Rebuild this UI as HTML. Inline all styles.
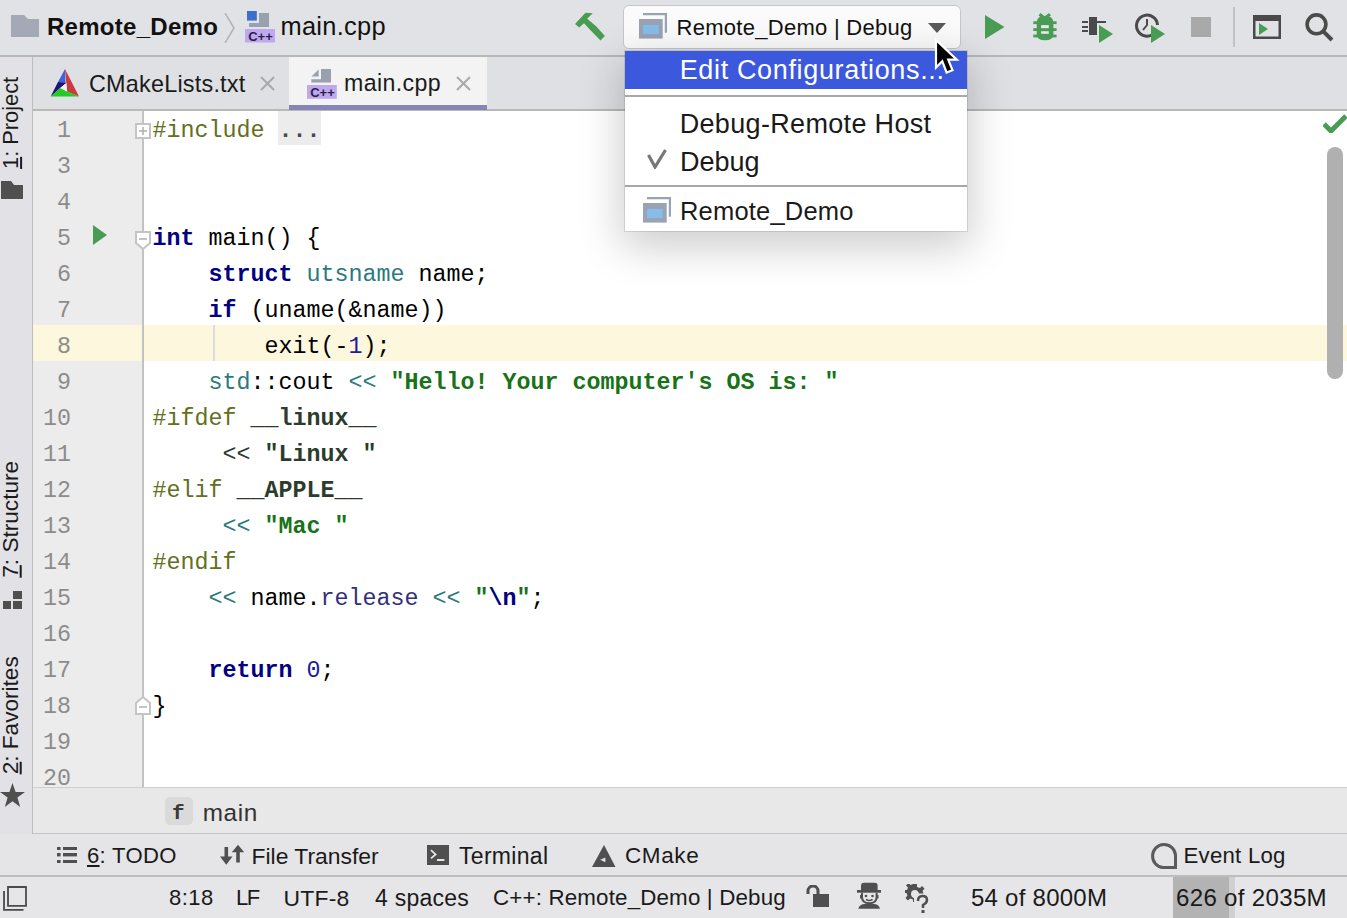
<!DOCTYPE html>
<html><head><meta charset="utf-8">
<style>
*{margin:0;padding:0;box-sizing:border-box}
html,body{width:1347px;height:918px;overflow:hidden;background:#e6e6e6;font-family:"Liberation Sans",sans-serif;color:#1a1a1a}
.a{position:absolute}
.t{position:absolute;white-space:pre;line-height:1}
#toolbar{left:0;top:0;width:1347px;height:57px;background:#e1e2e6;border-bottom:2px solid #b6b7b6}
#tabs{left:32px;top:57px;width:1315px;height:54px;background:#dfe0e4;border-bottom:2px solid #b8b8b8}
#strip{left:0;top:57px;width:33px;height:820px;background:#e2e2e6;border-right:1px solid #bdbdbd}
#gutter{left:33px;top:111px;width:111px;height:677px;background:#ececec;border-right:2px solid #c2c2c2}
#editor{left:144px;top:111px;width:1203px;height:677px;background:#fff;overflow:hidden}
#crumbs{left:33px;top:788px;width:1314px;height:46px;background:#e8e8e8;border-top:1px solid #cfcfcf;border-bottom:1px solid #c4c4c4}
#twbar{left:0;top:834px;width:1347px;height:43px;background:#e5e5e7;border-bottom:2px solid #bdbdbd}
#status{left:0;top:877px;width:1347px;height:41px;background:#e6e6e9}
.code{font-family:"Liberation Mono",monospace;font-size:23.33px}
.ln{position:absolute;left:33px;width:38px;text-align:right;font-family:"Liberation Mono",monospace;font-size:23.33px;color:#8c8c8c;white-space:pre}
.cl{position:absolute;left:153px;font-family:"Liberation Mono",monospace;font-size:23.33px;color:#000;white-space:pre}
.kw{color:#000080;font-weight:bold}
.pp{color:#627020}
.ty{color:#2a7a7e}
.st{color:#187218;font-weight:bold}
.in{color:#2b3b2d;font-weight:bold}
.fd{color:#32307a}
.nm{color:#1d1d9a}
.ui{font-family:"Liberation Sans",sans-serif}
</style></head><body>

<!-- TOOLBAR -->
<div id="toolbar" class="a"></div>
<svg class="a" style="left:11px;top:15px" width="29" height="22" viewBox="0 0 29 22"><path d="M0 0H13L17 4H28V22H0Z" fill="#a3a9b7"/></svg>
<div class="t" style="left:47px;top:15px;font-size:24px;font-weight:bold;color:#111;letter-spacing:0.28px">Remote_Demo</div>
<svg class="a" style="left:224px;top:13px" width="12" height="30" viewBox="0 0 12 30"><path d="M1 0L10 15L1 30" stroke="#b3b3b3" stroke-width="1.5" fill="none"/></svg>
<!-- c++ file icon -->
<svg class="a" style="left:245px;top:11px" width="30" height="32" viewBox="0 0 30 32"><path d="M14 2H24V16H4V12H14Z" fill="#9aa1ae"/><rect x="2" y="0" width="9.8" height="9.6" fill="#3a6fcc"/><rect x="0" y="18" width="30" height="13.5" fill="#c0a8f0"/><text x="15.5" y="29.6" font-family="Liberation Sans" font-size="13" font-weight="bold" fill="#2a2245" text-anchor="middle">C++</text></svg>
<div class="t" style="left:280.5px;top:13.5px;font-size:25.4px;color:#111;letter-spacing:0.3px">main.cpp</div>

<!-- hammer -->
<svg class="a" style="left:570px;top:8px" width="40" height="40" viewBox="0 0 40 40"><path d="M5 16.1L15.5 4.8L22.7 5.2L17.2 10.7L26.1 18.3L34.9 27.9L30.5 32.5L20 21.8L14 15.3L9.2 19.4Z" fill="#4a9c52"/></svg>
<!-- combo -->
<div class="a" style="left:623px;top:5px;width:338px;height:44px;background:#fbfbfb;border:1px solid #c6c6c6;border-radius:6px"></div>
<svg class="a" style="left:639px;top:13px" width="29" height="26" viewBox="0 0 29 26"><path d="M4 0H28V19.7H25.8V2.2H4Z" fill="#9aa3b3"/><rect x="0" y="6" width="23.7" height="19.6" fill="#9aa3b3"/><rect x="4.1" y="11.9" width="15.6" height="9.2" fill="#86bde9"/></svg>
<div class="t" style="left:676.5px;top:17px;font-size:22px;color:#111;letter-spacing:0.28px">Remote_Demo | Debug</div>
<svg class="a" style="left:928px;top:23px" width="18" height="10" viewBox="0 0 18 10"><path d="M0 0H18L9 10Z" fill="#5a5a5a"/></svg>

<!-- run icons -->
<svg class="a" style="left:985px;top:15px" width="20" height="24" viewBox="0 0 20 24"><path d="M0 0L19.5 12L0 24Z" fill="#499c54"/></svg>
<svg class="a" style="left:1028px;top:8px" width="35" height="37" viewBox="0 0 35 37"><g fill="#499c54"><path d="M11.5 6.3L16.7 10.3L22 6.3" stroke="#499c54" stroke-width="3.2" fill="none"/><path d="M11.5 9H22.5Q25.4 11 25.4 15V26Q25.4 32.3 17 32.3Q8.7 32.3 8.7 26V15Q8.7 11 11.5 9Z"/><rect x="5.3" y="13.3" width="23.3" height="2.8"/><rect x="5.3" y="20.2" width="23.3" height="2.8"/><rect x="5.3" y="26.6" width="23.3" height="2.8"/></g><rect x="13.1" y="17.1" width="7.7" height="3.1" fill="#e7e7e7"/><rect x="13.1" y="23.2" width="7.7" height="2.6" fill="#e7e7e7"/></svg>
<svg class="a" style="left:1082px;top:16px" width="32" height="28" viewBox="0 0 32 28"><g fill="#4a4a4a"><rect x="7" y="1" width="8" height="18"/><rect x="7" y="5" width="17" height="2"/><rect x="0" y="5" width="6" height="2"/><rect x="0" y="10" width="6" height="2"/><rect x="0" y="14" width="6" height="2"/></g><path d="M17 9L31 18L17 27Z" fill="#499c54"/></svg>
<svg class="a" style="left:1134px;top:13px" width="32" height="31" viewBox="0 0 32 31"><path d="M20 20.5A10.5 10.5 0 1 1 23.5 12" stroke="#4a4a4a" stroke-width="3" fill="none"/><path d="M13 6V12L9 17" stroke="#4a4a4a" stroke-width="2" fill="none"/><path d="M17 12L31 21L17 30Z" fill="#499c54"/></svg>
<div class="a" style="left:1191px;top:17px;width:20px;height:20px;background:#a9a9a9"></div>
<div class="a" style="left:1233px;top:7px;width:2px;height:40px;background:#c2c2c2"></div>
<svg class="a" style="left:1253px;top:15px" width="28" height="24" viewBox="0 0 28 24"><path d="M0 0H28V24H0Z M2.5 6V21.5H25.5V6Z" fill="#4a4a4a" fill-rule="evenodd"/><path d="M6 8L15 14L6 20Z" fill="#499c54"/></svg>
<svg class="a" style="left:1304px;top:12px" width="31" height="30" viewBox="0 0 31 30"><circle cx="12.5" cy="12.3" r="9.4" stroke="#4a4a4a" stroke-width="3.6" fill="none"/><path d="M19.3 19.3L28 28" stroke="#4a4a4a" stroke-width="4"/></svg>


<!-- TABS -->
<div id="tabs" class="a"></div>
<div class="a" style="left:289px;top:57px;width:198px;height:53px;background:#f3f3f3"></div>
<div class="a" style="left:289px;top:105px;width:198px;height:5px;background:#8785b6"></div>
<svg class="a" style="left:50px;top:68px" width="30" height="30" viewBox="0 0 30 30"><path d="M15 1L8 14L15.5 14.5Z" fill="#4060e0"/><path d="M8 14L0.7 28.4L10.2 20.1L16.3 14.9L15.5 14.5Z" fill="#1e1478"/><path d="M15 1L29 28.4L17 23.5L16.3 14.9Z" fill="#c83c40"/><path d="M0.7 28.4L29 28.4L17 23.5L10.2 20.1Z" fill="#22cc22"/><path d="M16.3 14.9L10.2 20.1L17 23.5Z" fill="#f4f4f4"/></svg>
<div class="t" style="left:89px;top:72.5px;font-size:23.4px;color:#1a1a1a;letter-spacing:0.22px">CMakeLists.txt</div>
<svg class="a" style="left:260px;top:76px" width="15" height="15" viewBox="0 0 15 15"><path d="M1 1L14 14M14 1L1 14" stroke="#a9a9a9" stroke-width="2"/></svg>
<svg class="a" style="left:307px;top:69px" width="31" height="31" viewBox="0 0 31 31"><path d="M4.5 7.5L11.6 0.4V7.5Z" fill="#9aa1ae"/><path d="M14 0H24V13.5H4.3V10.3H14Z" fill="#9aa1ae"/><rect x="0" y="16" width="29.8" height="13.8" fill="#c0a8f0"/><text x="15.5" y="27.8" font-family="Liberation Sans" font-size="13" font-weight="bold" fill="#2a2245" text-anchor="middle">C++</text></svg>
<div class="t" style="left:344px;top:72px;font-size:23.15px;color:#1a1a1a;letter-spacing:0.4px">main.cpp</div>
<svg class="a" style="left:456px;top:76px" width="15" height="15" viewBox="0 0 15 15"><path d="M1 1L14 14M14 1L1 14" stroke="#a9a9a9" stroke-width="2"/></svg>

<!-- LEFT STRIP -->
<div id="strip" class="a"></div>
<div class="t" style="left:-39px;top:112px;width:100px;font-size:21.8px;color:#1a1a1a;transform:rotate(-90deg);transform-origin:center;text-align:center"><u>1</u>: Project</div>
<svg class="a" style="left:1px;top:181px" width="22" height="18" viewBox="0 0 22 18"><path d="M0 0H10L13 4H22V18H0Z" fill="#4f4f4f"/></svg>
<div class="t" style="left:-52px;top:508px;width:126px;font-size:22.6px;color:#1a1a1a;transform:rotate(-90deg);transform-origin:center;text-align:center"><u>7</u>: Structure</div>
<svg class="a" style="left:3px;top:591px" width="19" height="18" viewBox="0 0 19 18"><rect x="10" y="0" width="9" height="8" fill="#4f4f4f"/><rect x="0" y="10" width="8" height="8" fill="#4f4f4f"/><rect x="10" y="10" width="9" height="8" fill="#4f4f4f"/></svg>
<div class="t" style="left:-52px;top:704px;width:126px;font-size:22.6px;color:#1a1a1a;transform:rotate(-90deg);transform-origin:center;text-align:center"><u>2</u>: Favorites</div>
<svg class="a" style="left:0px;top:783px" width="25" height="25" viewBox="0 0 25 25"><path d="M12.5 0L15.6 9H25L17.4 14.6L20.2 24L12.5 18.2L4.8 24L7.6 14.6L0 9H9.4Z" fill="#4f4f4f"/></svg>

<!-- GUTTER + EDITOR -->
<div id="gutter" class="a"></div>
<div id="editor" class="a"></div>
<div class="a" style="left:33px;top:325px;width:109px;height:36px;background:#fcf7dd"></div>
<div class="a" style="left:144px;top:325px;width:1203px;height:36px;background:#fcf7dd"></div>
<div class="a" style="left:213px;top:325px;width:2px;height:36px;background:#dcdcdc"></div>
<div class="a" style="left:278px;top:111px;width:43px;height:34px;background:#ececec"></div>

<div class="a" style="left:0;top:113px;width:80px;font-family:'Liberation Mono',monospace;font-size:23.33px;line-height:36px;color:#8c8c8c;text-align:right;white-space:pre;padding-right:9px">1
3
4
5
6
7
8
9
10
11
12
13
14
15
16
17
18
19
20</div>

<div class="a code" style="left:152.5px;top:113.2px;line-height:36px;white-space:pre;color:#000"><span class="pp">#include</span> <span style="color:#4a4a4a;font-weight:bold">...</span>


<span class="kw">int</span> main() {
    <span class="kw">struct</span> <span class="ty">utsname</span> name;
    <span class="kw">if</span> (uname(&amp;name))
        exit(-<span class="nm">1</span>);
    <span class="ty">std</span>::cout <span class="ty">&lt;&lt;</span> <span class="st">"Hello! Your computer's OS is: "</span>
<span class="pp">#ifdef</span> <span class="in">__linux__</span>
     <span style="color:#2b3b2d">&lt;&lt;</span> <span class="in">"Linux "</span>
<span class="pp">#elif</span> <span class="in">__APPLE__</span>
     <span class="ty">&lt;&lt;</span> <span class="st">"Mac "</span>
<span class="pp">#endif</span>
    <span class="ty">&lt;&lt;</span> name.<span class="fd">release</span> <span class="ty">&lt;&lt;</span> <span class="st">"<span class="kw">\n</span>"</span>;

    <span class="kw">return</span> <span class="nm">0</span>;
}</div>

<!-- gutter icons -->
<svg class="a" style="left:135px;top:123px" width="16" height="16" viewBox="0 0 16 16"><rect x="1" y="1" width="14" height="14" fill="#fff" stroke="#c4c4c4" stroke-width="2"/><path d="M4 8H12M8 4V12" stroke="#b0b0b0" stroke-width="1.5"/></svg>
<svg class="a" style="left:135px;top:231px" width="16" height="19" viewBox="0 0 16 19"><path d="M1 1H15V12L8 18L1 12Z" fill="#fff" stroke="#c4c4c4" stroke-width="2"/><path d="M4 8H12" stroke="#b0b0b0" stroke-width="1.5"/></svg>
<svg class="a" style="left:135px;top:696px" width="16" height="19" viewBox="0 0 16 19"><path d="M1 18H15V7L8 1L1 7Z" fill="#fff" stroke="#c4c4c4" stroke-width="2"/><path d="M4 11H12" stroke="#b0b0b0" stroke-width="1.5"/></svg>
<svg class="a" style="left:93px;top:225px" width="14" height="20" viewBox="0 0 14 20"><path d="M0 0L14 10L0 20Z" fill="#499c54"/></svg>

<!-- right side -->
<svg class="a" style="left:1323px;top:114px" width="24" height="19" viewBox="0 0 24 19"><path d="M1 10L8 17L23 2" stroke="#499c54" stroke-width="5" fill="none"/></svg>
<div class="a" style="left:1327px;top:147px;width:16px;height:232px;background:#b0b0b0;border-radius:8px"></div>

<!-- BREADCRUMBS -->
<div id="crumbs" class="a" style="top:787px;height:47px"></div>
<div class="a" style="left:165px;top:797px;width:28px;height:28px;background:#dadada;border-radius:5px"></div>
<div class="t" style="left:172px;top:803px;font-family:'Liberation Mono',monospace;font-size:21px;color:#3a3a3a;font-weight:bold">f</div>
<div class="t" style="left:202.7px;top:801px;font-size:24.3px;color:#333;letter-spacing:0.6px">main</div>

<!-- TOOL WINDOW BAR -->
<div id="twbar" class="a"></div>
<svg class="a" style="left:57px;top:847px" width="21" height="17" viewBox="0 0 21 17"><g fill="#4f4f4f"><rect x="0" y="0" width="3.6" height="3"/><rect x="6" y="0" width="14" height="3"/><rect x="0" y="6" width="3.6" height="3.4"/><rect x="6" y="6" width="14" height="3.4"/><rect x="0" y="13" width="3.6" height="3"/><rect x="6" y="13" width="14" height="3"/></g></svg>
<div class="t" style="left:87px;top:845px;font-size:22.1px;color:#1a1a1a;letter-spacing:0.3px"><u>6</u>: TODO</div>
<svg class="a" style="left:220px;top:844px" width="25" height="22" viewBox="0 0 25 22"><g fill="#4f4f4f"><rect x="4.5" y="3" width="3.6" height="11"/><path d="M0 12.5H12.5L6.25 20.7Z"/><rect x="16.2" y="7" width="3.6" height="11.5"/><path d="M11.8 8.2H24.2L18 0.7Z"/></g></svg>
<div class="t" style="left:251.5px;top:845px;font-size:22.9px;color:#1a1a1a">File Transfer</div>
<svg class="a" style="left:427px;top:845px" width="22" height="20" viewBox="0 0 22 20"><rect width="22" height="20" fill="#4f4f4f"/><path d="M4 5.2L8.6 9.4L4 13.4" stroke="#e5e5e7" stroke-width="1.8" fill="none"/><rect x="10" y="14" width="7.4" height="2" fill="#e5e5e7"/></svg>
<div class="t" style="left:459px;top:845px;font-size:23px;color:#1a1a1a;letter-spacing:0.3px">Terminal</div>
<svg class="a" style="left:592px;top:845px" width="24" height="22" viewBox="0 0 24 22"><path d="M12 0L23.5 22H0Z" fill="#4f4f4f"/><path d="M8.2 14.8L13.4 12.4V17.2Z" fill="#e5e5e7"/></svg>
<div class="t" style="left:625px;top:845px;font-size:22.5px;color:#1a1a1a;letter-spacing:0.6px">CMake</div>
<svg class="a" style="left:1150px;top:842px" width="28" height="28" viewBox="0 0 28 28"><path d="M25.5 25.5H13A11.5 11.5 0 1 1 25.5 13Z" stroke="#5a5a5a" stroke-width="3" fill="none"/></svg>
<div class="t" style="left:1183.5px;top:845px;font-size:22.2px;color:#1a1a1a;letter-spacing:0.25px">Event Log</div>

<!-- STATUS BAR -->
<div id="status" class="a"></div>
<svg class="a" style="left:3px;top:886px" width="25" height="26" viewBox="0 0 25 26"><path d="M5 1H23V19.8H5Z" stroke="#4a4a4a" stroke-width="1.8" fill="none"/><path d="M1 5V23.8H20.5" stroke="#4a4a4a" stroke-width="1.8" fill="none"/></svg>
<div class="a" style="left:1173px;top:877px;width:56px;height:41px;background:#b3b3b3"></div>
<div class="a" style="left:1229px;top:877px;width:6px;height:41px;background:#d0d0d0"></div>
<div class="t" style="left:169px;top:887px;font-size:22px;color:#1a1a1a;letter-spacing:0.5px">8:18</div>
<div class="t" style="left:236px;top:887px;font-size:22px;letter-spacing:-1.5px;color:#1a1a1a">LF</div>
<div class="t" style="left:283.5px;top:887px;font-size:22.9px;color:#1a1a1a;letter-spacing:0.25px">UTF-8</div>
<div class="t" style="left:375px;top:887px;font-size:23px;color:#1a1a1a;letter-spacing:0.25px">4 spaces</div>
<div class="t" style="left:493px;top:887px;font-size:22.35px;color:#1a1a1a;letter-spacing:0.16px">C++: Remote_Demo | Debug</div>
<svg class="a" style="left:806px;top:885px" width="24" height="22" viewBox="0 0 24 22"><path d="M2 9V6A5 5 0 0 1 12 6V9" stroke="#4f4f4f" stroke-width="3" fill="none"/><rect x="7" y="9" width="16" height="13" fill="#4f4f4f"/></svg>
<svg class="a" style="left:857px;top:882px" width="25" height="27" viewBox="0 0 25 27"><g fill="#4f4f4f"><path d="M4 8.7V3.7Q4 0.7 7 0.7H17.6Q20.6 0.7 20.6 3.7V8.7Z"/><rect x="0" y="8" width="24" height="2.7"/><path d="M1.2 26.8Q2.5 22 8 22H16.5Q22 22 23 26.8Z"/><circle cx="9" cy="14" r="1.3"/><circle cx="15.5" cy="14" r="1.3"/><rect x="3" y="13" width="2" height="3.5"/><rect x="19.5" y="13" width="2" height="3.5"/></g><path d="M5 10.7V15Q5 21.3 12.3 21.3Q19.6 21.3 19.6 15V10.7" stroke="#4f4f4f" stroke-width="2" fill="none"/><path d="M9 17.3Q12.3 19.6 15.6 17.3" stroke="#4f4f4f" stroke-width="1.6" fill="none"/></svg>
<svg class="a" style="left:905px;top:884px" width="25" height="29" viewBox="0 0 25 29"><path d="M8 0H12V3L15 4L17 2L19.5 4.5L17.5 7L18.5 9.5H14Q13 6 10 6Q6 6 6 10Q6 13 9 14V18H8V15.5L5 14.5L3 16.5L0.5 14L2.5 11.5L1.5 9H0V6H2L3 3.5L1 1.5L3.5 -1L5.5 1Z" fill="#4f4f4f"/><path d="M13 17Q13 12 17.5 12Q22 12 22 16Q22 19 18 21V24" stroke="#4f4f4f" stroke-width="2.5" fill="none"/><rect x="16.5" y="26" width="3" height="3" fill="#4f4f4f"/></svg>
<div class="t" style="left:971px;top:886px;font-size:24px;color:#1a1a1a;letter-spacing:0.25px">54 of 8000M</div>
<div class="t" style="left:1176px;top:886px;font-size:24.1px;color:#1a1a1a;letter-spacing:0.3px">626 of 2035M</div>

<!-- POPUP -->
<div class="a" style="left:625px;top:51px;width:342px;height:180px;background:#fff;box-shadow:0 12px 40px 4px rgba(0,0,0,0.2),0 0 0 1px rgba(0,0,0,0.10)"></div>
<div class="a" style="left:625px;top:51px;width:342px;height:38px;background:#3c58dc"></div>
<div class="a" style="left:625px;top:95px;width:342px;height:2px;background:#a8a8a8"></div>
<div class="a" style="left:625px;top:185px;width:342px;height:2px;background:#a8a8a8"></div>
<div class="t" style="left:679.7px;top:56.5px;font-size:27px;letter-spacing:0.65px;color:#fff">Edit Configurations...</div>
<div class="t" style="left:679.7px;top:110.5px;font-size:27px;letter-spacing:0.33px;color:#1a1a1a">Debug-Remote Host</div>
<svg class="a" style="left:647px;top:149px" width="20" height="20" viewBox="0 0 20 20"><path d="M1.5 6L8 18L18.5 1" stroke="#777" stroke-width="3.2" fill="none"/></svg>
<div class="t" style="left:680px;top:148.5px;font-size:27px;color:#1a1a1a">Debug</div>
<svg class="a" style="left:643px;top:197px" width="28" height="26" viewBox="0 0 28 26"><path d="M4 0H28V19.7H25.8V2.2H4Z" fill="#9aa3b3"/><rect x="0" y="6" width="23.7" height="19.6" fill="#9aa3b3"/><rect x="4.1" y="11.9" width="15.6" height="9.2" fill="#86bde9"/></svg>
<div class="t" style="left:680px;top:198.5px;font-size:25.5px;color:#1a1a1a;letter-spacing:0.2px">Remote_Demo</div>

<!-- cursor -->
<svg class="a" style="left:933px;top:38px" width="28" height="38" viewBox="0 0 28 38"><path d="M3 2V29.5L9.3 23.3L13.6 34.5L19.5 32.2L15.2 21.6H23.8Z" fill="#000" stroke="#fff" stroke-width="2.2" stroke-linejoin="miter"/></svg>

</body></html>
